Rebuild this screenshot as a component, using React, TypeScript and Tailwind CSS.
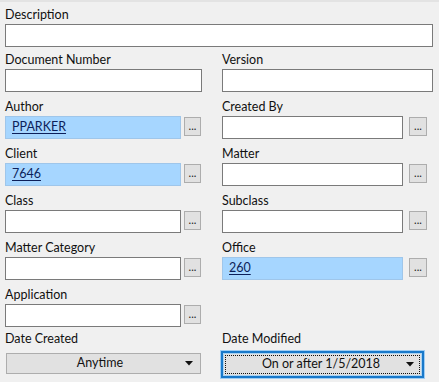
import React from "react";

const font = { fontFamily: 'Lato, "Noto Sans", sans-serif' };

const Label = ({ text, h = "h-[24px]" }: { text: string; h?: string }) => (
  <div className={`${h} flex items-end pb-[1px] text-[12.5px] leading-[16px] text-[#111]`}>{text}</div>
);

const TextBox = ({ w, value }: { w: string; value?: string }) =>
  value ? (
    <div
      className={`${w} h-[23px] border border-[#9fc6ea] bg-[#a6d6ff] pl-[6px] flex items-center text-[12.5px] text-[#0c1f5a]`}
    >
      <span className="underline underline-offset-2">{value}</span>
    </div>
  ) : (
    <div className={`${w} h-[23px] border border-[#7a7a7a] bg-white`} />
  );

const Dots = ({ w }: { w: string }) => (
  <div
    className={`${w} h-[19px] mt-[1px] border border-[#adadad] bg-[#e1e1e1] flex items-end justify-center pb-[4px] text-[11px] leading-none text-[#222]`}
  >
    ...
  </div>
);

const Lookup = ({ left, value }: { left?: boolean; value?: string }) =>
  left ? (
    <div className="flex items-start">
      <TextBox w="w-[176px]" value={value} />
      <div className="ml-[3px]">
        <Dots w="w-[17px]" />
      </div>
    </div>
  ) : (
    <div className="flex items-start">
      <TextBox w="w-[181px]" value={value} />
      <div className="ml-[6px]">
        <Dots w="w-[18px]" />
      </div>
    </div>
  );

const Arrow = () => (
  <svg width="8" height="5" viewBox="0 0 8 5" className="shrink-0">
    <path d="M0 0 L8 0 L4 4.5 Z" fill="#111" />
  </svg>
);

export default function App() {
  return (
    <div
      className="w-[439px] h-[382px] overflow-hidden bg-[#f0f0f0] border-t-2 border-[#e3e3e3] pl-[5px] pr-[6px]"
      style={font}
    >
      <Label text="Description" h="h-[22px]" />
      <div className="w-[428px] h-[23px] border border-[#7a7a7a] bg-white" />

      <div className="grid grid-cols-[197px_211px] gap-x-[20px]">
        <div>
          <Label text="Document Number" h="h-[22px]" />
          <TextBox w="w-[197px]" />
        </div>
        <div>
          <Label text="Version" h="h-[22px]" />
          <TextBox w="w-[211px]" />
        </div>

        <div>
          <Label text="Author" />
          <Lookup left value="PPARKER" />
        </div>
        <div>
          <Label text="Created By" />
          <Lookup />
        </div>

        <div>
          <Label text="Client" />
          <Lookup left value="7646" />
        </div>
        <div>
          <Label text="Matter" />
          <Lookup />
        </div>

        <div>
          <Label text="Class" />
          <Lookup left />
        </div>
        <div>
          <Label text="Subclass" />
          <Lookup />
        </div>

        <div>
          <Label text="Matter Category" />
          <Lookup left />
        </div>
        <div>
          <Label text="Office" />
          <Lookup value="260" />
        </div>

        <div>
          <Label text="Application" />
          <Lookup left />
        </div>
        <div />

        <div>
          <div className="h-[26px] flex items-end pb-[6px] text-[12.5px] leading-[16px] text-[#111]">Date Created</div>
          <div className="ml-[1px] w-[195px] h-[21px] border border-[#adadad] bg-[#e1e1e1] flex items-center pl-[8px] pr-[7px] text-[12.5px] text-[#111]">
            <span className="flex-1 text-center">Anytime</span>
            <Arrow />
          </div>
        </div>
        <div>
          <div className="h-[23px] flex items-end pb-[3px] text-[12.5px] leading-[16px] text-[#111]">Date Modified</div>
          <div className="-ml-[2px] w-[205px] h-[29px] border border-[#9fcdf3] bg-[#cfe6f8]">
            <div className="w-full h-full border-2 border-[#1979ca] bg-[#a8d2f2] p-[1px]">
              <div className="w-full h-full bg-[#e1e1e1] p-[1px]">
                <div className="w-full h-full border border-dotted border-[#111] flex items-center pl-[10px] pr-[5px] text-[12.5px] text-[#111]">
                  <span className="flex-1 text-center">On or after 1/5/2018</span>
                  <Arrow />
                </div>
              </div>
            </div>
          </div>
        </div>
      </div>
    </div>
  );
}
